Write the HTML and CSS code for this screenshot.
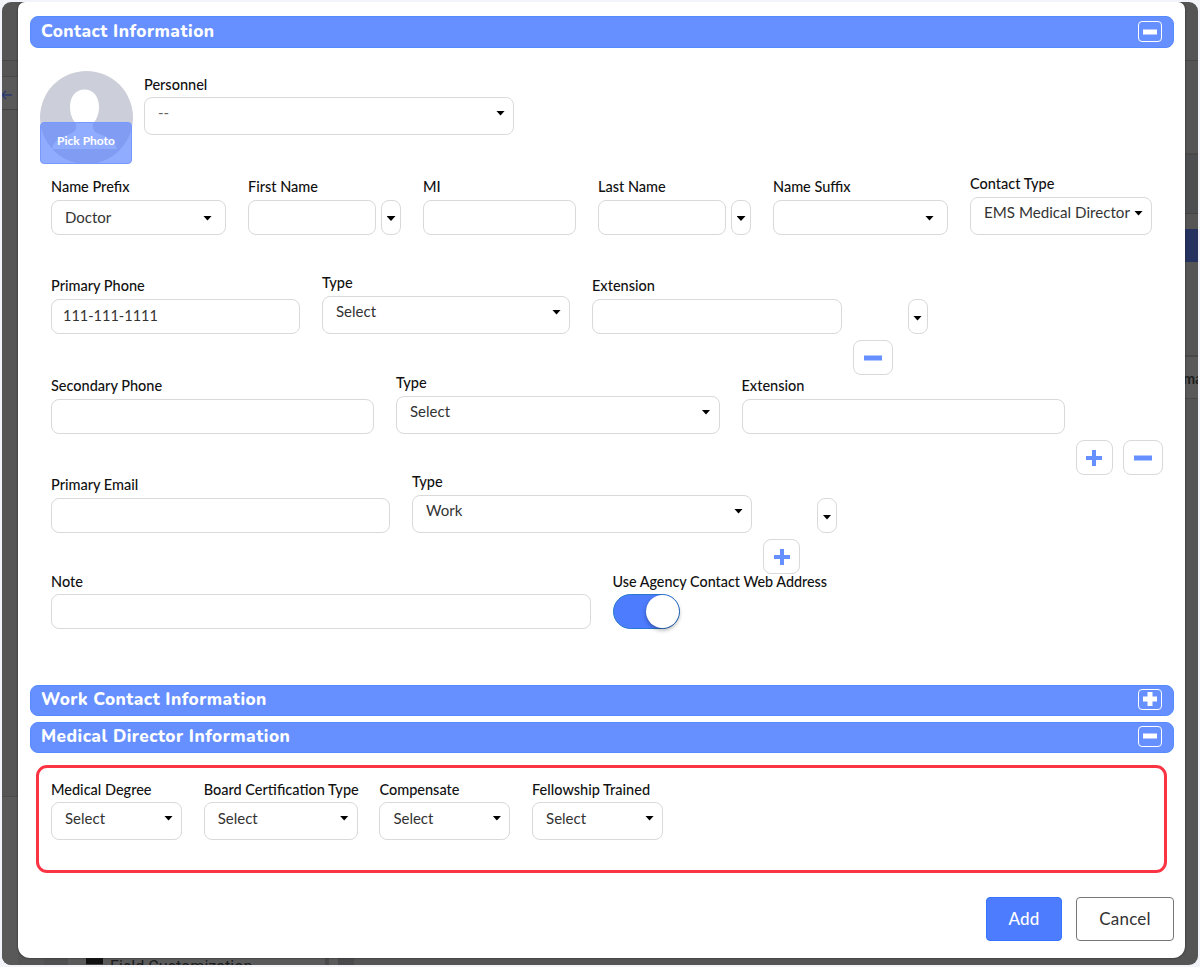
FILE: index.html
```html
<!DOCTYPE html>
<html lang="en">
<head>
<meta charset="utf-8">
<title>Contact Information</title>
<link rel="stylesheet" href="styles.css">
</head>
<body>
<div class="frame">
  <div class="backdrop">
    <span class="strip left-a"></span>
    <span class="strip left-b"><svg width="12" height="12" viewBox="0 0 12 12"><path d="M11 6H1M5 2L1 6l4 4" fill="none" stroke="#2a3a70" stroke-width="1.3"/></svg></span>
    <span class="strip left-c"></span>
    <span class="strip right-a"></span>
    <span class="strip right-b"></span>
    <span class="strip right-c"></span>
    <span class="strip right-d">ma</span>
    <span class="strip bottom"><i></i>Field Customization</span>
  </div>
  <main class="modal">
    <header class="bar"><h2>Contact Information</h2><button class="toggle-btn"><svg width="14" height="14" viewBox="0 0 14 14"><path d="M0 4.500h14v5H0z" fill="#fff"/></svg></button></header>
    <section class="contact">
      <div class="person">
        <div class="avatar">
          <svg width="93" height="93" viewBox="0 0 93 93">
            <defs><clipPath id="round"><circle cx="46.5" cy="46.5" r="46.5"/></clipPath></defs>
            <circle cx="46.5" cy="46.5" r="46.5" fill="#cccfd9"/>
            <path clip-path="url(#round)" d="M30 36c0-11 6-17.500 14.500-17.500S59 25 59 36c0 8-3 13-6 17-1 5 1 8 6 10 8 3 15 5 18 15H12c2-9 9-12 18-15 5-2 7-5 6-10-3-4-6-9-6-17z" fill="#fff"/>
          </svg>
          <span class="pick">Pick Photo</span>
        </div>
        <div class="field personnel"><label>Personnel</label><div class="box select"><span class="muted">--</span><i class="caret"></i></div></div>
      </div>

      <div class="row names">
        <div class="field"><label>Name Prefix</label><div class="box short"><span>Doctor</span><i class="caret"></i></div></div>
        <div class="field"><label>First Name</label><div class="combo"><div class="box input"></div><div class="box mini"><i class="caret"></i></div></div></div>
        <div class="field"><label>MI</label><div class="box input"></div></div>
        <div class="field"><label>Last Name</label><div class="combo"><div class="box input"></div><div class="box mini"><i class="caret"></i></div></div></div>
        <div class="field"><label>Name Suffix</label><div class="box short"><span></span><i class="caret"></i></div></div>
        <div class="field"><label>Contact Type</label><div class="box select tight"><span>EMS Medical Director</span><i class="caret"></i></div></div>
      </div>

      <div class="row phone1">
        <div class="field"><label>Primary Phone</label><div class="box input"><span class="number">111-111-1111</span></div></div>
        <div class="field"><label>Type</label><div class="box select"><span>Select</span><i class="caret"></i></div></div>
        <div class="field"><label>Extension</label><div class="box input"></div></div>
        <div class="actions"><div class="box mini"><i class="caret"></i></div><div class="buttons"><button class="box act minus"><svg width="18" height="16" viewBox="0 0 18 16"><path d="M0 5.500h18v5H0z" fill="#6690ff"/></svg></button></div></div>
      </div>

      <div class="row phone2">
        <div class="field"><label>Secondary Phone</label><div class="box input"></div></div>
        <div class="field"><label>Type</label><div class="box select"><span>Select</span><i class="caret"></i></div></div>
        <div class="field"><label>Extension</label><div class="box input"></div></div>
        <div class="actions"><div class="buttons"><button class="box act plus"><svg width="16" height="16" viewBox="0 0 16 16"><path d="M6 0h4v6h6v4h-6v6H6v-6H0V6h6z" fill="#6690ff"/></svg></button><button class="box act minus"><svg width="18" height="16" viewBox="0 0 18 16"><path d="M0 5.500h18v5H0z" fill="#6690ff"/></svg></button></div></div>
      </div>

      <div class="row email">
        <div class="field"><label>Primary Email</label><div class="box input"></div></div>
        <div class="field"><label>Type</label><div class="box select"><span>Work</span><i class="caret"></i></div></div>
        <div class="actions"><div class="box mini"><i class="caret"></i></div><div class="buttons"><button class="box act plus"><svg width="16" height="16" viewBox="0 0 16 16"><path d="M6 0h4v6h6v4h-6v6H6v-6H0V6h6z" fill="#6690ff"/></svg></button></div></div>
      </div>

      <div class="row note">
        <div class="field"><label>Note</label><div class="box input"></div></div>
        <div class="field web"><label>Use Agency Contact Web Address</label><div class="switch"><i></i></div></div>
      </div>
    </section>

    <header class="bar"><h2>Work Contact Information</h2><button class="toggle-btn"><svg width="14" height="14" viewBox="0 0 14 14"><path d="M4.500 0h5v4.500H14v5H9.500V14h-5V9.500H0v-5h4.500z" fill="#fff"/></svg></button></header>
    <header class="bar"><h2>Medical Director Information</h2><button class="toggle-btn"><svg width="14" height="14" viewBox="0 0 14 14"><path d="M0 4.500h14v5H0z" fill="#fff"/></svg></button></header>
    <section class="medical">
      <div class="field"><label>Medical Degree</label><div class="box select"><span>Select</span><i class="caret"></i></div></div>
      <div class="field"><label>Board Certification Type</label><div class="box select"><span>Select</span><i class="caret"></i></div></div>
      <div class="field"><label>Compensate</label><div class="box select"><span>Select</span><i class="caret"></i></div></div>
      <div class="field"><label>Fellowship Trained</label><div class="box select"><span>Select</span><i class="caret"></i></div></div>
    </section>
    <footer class="footer"><button class="btn primary">Add</button><button class="btn">Cancel</button></footer>
  </main>
</div>
</body>
</html>
```
FILE: styles.css
```css
* { box-sizing: border-box; }
body { margin: 0; padding: 2px; width: 1200px; height: 967px; overflow: hidden; background: #f3f3fa; font: 500 14.500px/20px Lato, sans-serif; color: #111; }
button { font: inherit; padding: 0; cursor: pointer; }
h2 { margin: 0; }
.frame { position: relative; width: 1196px; height: 963px; padding-left: 16px; border-radius: 9px; overflow: hidden; background: #555; }
.modal { position: relative; width: 1167px; height: 956px; padding: 14px 11px 0 11.500px; background: #fff; border-radius: 7px 7px 12px 12px; box-shadow: 0 0 2px #222; }

/* dimmed page behind the dialog */
.strip { position: absolute; }
.left-a { left: 0; top: 58px; width: 16px; height: 17px; border: solid #494949; border-width: 1px 0; }
.left-b { left: 0; top: 75px; width: 16px; height: 33px; background: #595959; border-bottom: 1px solid #444; }
.left-b svg { display: block; margin: 12px 0 0 -1px; }
.left-c { left: 0; top: 794px; width: 16px; height: 170px; background: #595959; border-top: 1px solid #4b4b4b; }
.right-a { right: 0; top: 58px; width: 13px; height: 95px; border-top: 1px solid #484848; border-bottom: 2px solid #484848; }
.right-b { right: 0; top: 153px; width: 13px; height: 59px; background: #4c4e50; border-bottom: 1px solid #444; }
.right-c { right: 0; top: 227px; width: 13px; height: 33px; background: #25315f; }
.right-d { right: 0; top: 353px; width: 13px; height: 44px; overflow: hidden; background: #595959; border: solid #484848; border-width: 2px 0 1px; font: 700 14.500px/43px Lato, sans-serif; color: #1c1c1c; text-indent: -2px; }
.bottom { left: 42px; top: 956px; width: 310px; height: 10px; padding-left: 42px; display: flex; gap: 7px; overflow: hidden; background: linear-gradient(90deg, #505052 24px, #5a5a5a 24px 281px, #4a4a4c 281px 285px, #5a5a5a 285px 294px, #4a4a4c 294px); font: 400 16.100px/18px Roboto, sans-serif; color: #1c1c1c; }
.bottom i { width: 17px; height: 10px; background: #111; border-bottom: 4px solid #444; }

/* section bars */
.bar { display: flex; justify-content: space-between; height: 31.500px; padding: 0 11px 0 10.500px; background: #6690ff; border: 1px solid #568aff; border-radius: 8px; color: #fff; }
.bar h2 { font: 800 17.300px/29px Nunito, "Noto Sans", sans-serif; letter-spacing: .46px; }
.bar + .bar { margin-top: 5.500px; }
.toggle-btn { display: flex; align-items: center; justify-content: center; width: 24px; height: 21px; margin-top: 4px; background: none; border: 1.500px solid #fff; border-radius: 4px; }
.contact + .bar h2, .bar + .bar h2 { line-height: 28px; }
.contact + .bar .toggle-btn, .bar + .bar .toggle-btn { margin-top: 3px; }

/* fields */
.contact { height: 637px; padding: 23px 0 0 21.500px; }
.field { display: flex; flex-direction: column; gap: 3px; min-width: 0; white-space: nowrap; }
.box { display: flex; align-items: center; border: 1px solid #d9d9d9; border-radius: 8px; background: #fff; font-weight: 400; font-size: 15px; color: #333; }
.input { height: 35px; padding: 0 0 1px 11px; }
.number { font-size: 14.500px; }
.short, .select { height: 38px; justify-content: space-between; padding: 0 13px; }
.short { height: 35px; padding-bottom: 1px; }
.select { padding: 0 8px 7px 13px; }
.tight { font-size: 15.150px; }
.mini { width: 20px; height: 35px; justify-content: center; flex: none; }
.mini .caret { margin-top: 3px; }
.caret { width: 9px; height: 5px; background: #000; clip-path: polygon(0 0, 100% 0, 50% 100%); flex: none; }
.short .caret { margin-top: 3px; }
.select .caret { margin-top: 2px; }
.muted { color: #666; }
.combo { display: flex; gap: 5px; }
.combo .input { flex: 1; }

.person { display: flex; gap: 11px; height: 93px; margin-left: -11px; }
.avatar { position: relative; width: 93px; height: 93px; }
.avatar svg { display: block; }
.pick { position: absolute; left: 0; right: 1px; bottom: 0; height: 42px; background: rgba(92, 132, 255, .68); border: 1px solid #7898ff; border-radius: 4px; color: #fff; font: 700 12px/36px Lato, sans-serif; text-align: center; }
.personnel { width: 370px; padding-top: 4px; gap: 2px; }

.row { display: grid; column-gap: 22px; height: 61px; align-items: end; }
.names { grid-template-columns: 175px 153px 153px 153px 175px 182px; margin-top: 10px; }
.phone1 { grid-template-columns: 249px 248px 249.500px 76px; margin-top: 38px; }
.phone2 { grid-template-columns: 323px 323.500px 323px 88px; margin-top: 39px; }
.email { grid-template-columns: 339px 340px 74px; margin-top: 38px; }
.note { grid-template-columns: 540px 216px; column-gap: 21.500px; margin-top: 35px; }
.note .field { gap: 2px; }
.web label { font-size: 14.350px; }
.actions { display: flex; flex-direction: column; align-items: flex-end; gap: 6px; margin: 0 0 -41.500px -11px; }
.phone1 .actions { margin-right: 12px; }
.email .actions { margin-right: 11px; }
.buttons { display: flex; gap: 10px; align-self: flex-start; }
.act { height: 35px; justify-content: center; }
.plus { width: 37px; }
.minus { width: 40px; }
.switch { width: 67.500px; height: 35px; display: flex; justify-content: flex-end; padding: 0; border: 1px solid #2878cf; border-radius: 18px; background: #4d7cff; }
.switch i { width: 33px; height: 33px; border-radius: 50%; background: #fff; box-shadow: 0 2px 4px rgba(0, 0, 0, .35); }

.medical { display: flex; gap: 21.700px; height: 108px; margin: 11.500px 7px 0 6.500px; padding: 12px 0 0 12px; border: 3px solid #fa3443; border-radius: 11px; }
.medical .field { width: 131px; gap: 2px; }
.medical .select { padding-bottom: 5px; }
.medical .caret { margin-top: 0; }
.medical .field:nth-child(2) { width: 154px; }

.footer { display: flex; justify-content: flex-end; gap: 14px; margin-top: 24px; }
.btn { width: 98px; height: 44px; border: 1px solid #777; border-radius: 4px; background: #fff; color: #333; font: 400 17px Lato, sans-serif; letter-spacing: .2px; }
.primary { width: 76px; background: #4d7cff; border-color: #3474ff; color: #fff; font-weight: 500; }
```
